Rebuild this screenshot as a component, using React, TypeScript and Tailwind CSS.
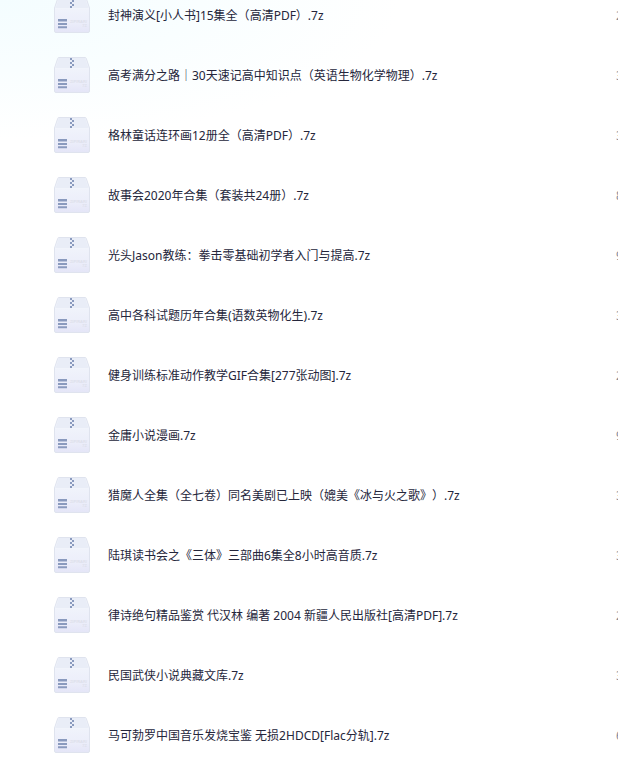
type ArchiveFile = {
  name: string;
  size: string;
};

const FILES: ArchiveFile[] = [
  { name: "封神演义[小人书]15集全（高清PDF）.7z", size: "2" },
  { name: "高考满分之路｜30天速记高中知识点（英语生物化学物理）.7z", size: "3" },
  { name: "格林童话连环画12册全（高清PDF）.7z", size: "3" },
  { name: "故事会2020年合集（套装共24册）.7z", size: "8" },
  { name: "光头Jason教练：拳击零基础初学者入门与提高.7z", size: "9" },
  { name: "高中各科试题历年合集(语数英物化生).7z", size: "3" },
  { name: "健身训练标准动作教学GIF合集[277张动图].7z", size: "2" },
  { name: "金庸小说漫画.7z", size: "9" },
  { name: "猎魔人全集（全七卷）同名美剧已上映（媲美《冰与火之歌》）.7z", size: "3" },
  { name: "陆琪读书会之《三体》三部曲6集全8小时高音质.7z", size: "3" },
  { name: "律诗绝句精品鉴赏 代汉林 编著 2004 新疆人民出版社[高清PDF].7z", size: "2" },
  { name: "民国武侠小说典藏文库.7z", size: "3" },
  { name: "马可勃罗中国音乐发烧宝鉴 无损2HDCD[Flac分轨].7z", size: "6" },
];

function ArchiveIcon() {
  return (
    <svg className="size-9 shrink-0" viewBox="0 0 36 36" aria-hidden="true">
      <defs>
        <linearGradient id="box-front" x1="0" y1="0" x2="0" y2="1">
          <stop offset="0.3" stopColor="#f0f3fb" />
          <stop offset="0.7" stopColor="#eceefa" />
          <stop offset="1" stopColor="#e4e5f7" />
        </linearGradient>
      </defs>
      <path
        d="M5 .5h26q1 0 1.300 1L35.500 11v23q0 1.500-1.500 1.500H2Q.5 35.500.5 34V11L3.700 1.500Q4 .5 5 .5Z"
        fill="url(#box-front)"
        stroke="#dfe3ee"
      />
      <path d="M5 1h26l3.500 10h-33Z" fill="#e9edf7" />
      <path d="M1 11.500h34" stroke="#f1f4fb" />
      <path
        d="M16 1h2v2h-2zM18 3h2v2h-2zM16 5h2v2h-2zM18 7h2v2h-2zM16 9h2v2h-2z"
        fill="#8a9abe"
      />
      <path d="M4 22h9v2.600H4zM4 26h9v2H4zM4 29.200h9v2H4z" fill="#8a9abe" />
      <g
        fill="#dddfea"
        fontFamily="Liberation Sans, sans-serif"
        fontSize="4"
        fontWeight="700"
        textAnchor="end"
      >
        <text x="33" y="26">ZIP/RAR/</text>
        <text x="33" y="30">7Z</text>
      </g>
    </svg>
  );
}

function FileRow({ file }: { file: ArchiveFile }) {
  return (
    <tr className="h-[60px]">
      <td className="p-0 pl-[54px]">
        <a href="#" className="flex items-center gap-[18px] text-[#25263b]">
          <ArchiveIcon />
          <span className="whitespace-nowrap pt-0.5">{file.name}</span>
        </a>
      </td>
      <td className="p-0 pt-0.5 text-[#818999]">{file.size}</td>
    </tr>
  );
}

export default function App() {
  return (
    <main
      lang="zh-CN"
      className="min-h-screen overflow-hidden bg-white bg-[radial-gradient(ellipse_400px_140px_at_top_left,#f4fdff_0%,#f9feff_50%,#ffffff_100%)] bg-no-repeat font-['Noto_Sans','Noto_Sans_CJK_SC',sans-serif] text-xs [text-spacing-trim:space-all]"
    >
      <table className="-mt-[15px] w-full table-fixed border-collapse">
        <colgroup>
          <col />
          <col className="w-0.5" />
        </colgroup>
        <tbody>
          {FILES.map((file) => (
            <FileRow key={file.name} file={file} />
          ))}
        </tbody>
      </table>
    </main>
  );
}
